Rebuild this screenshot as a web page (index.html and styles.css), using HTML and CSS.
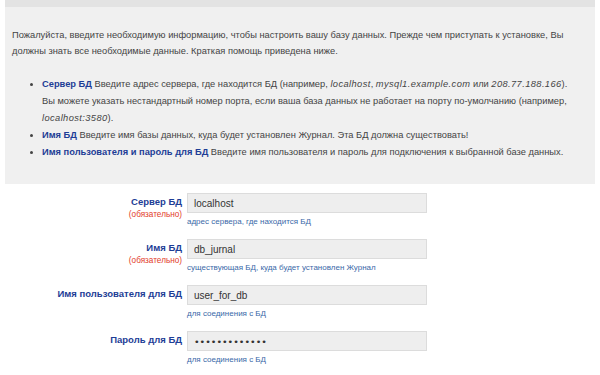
FILE: index.html
```html
<!DOCTYPE html>
<html lang="ru">
<head>
  <meta charset="UTF-8">
  <title>Установка: база данных</title>
  <link rel="stylesheet" href="styles.css">
</head>
<body>

  <div class="intro">
    <p>Пожалуйста, введите необходимую информацию, чтобы настроить вашу базу данных. Прежде чем приступать к установке, Вы должны знать все необходимые данные. Краткая помощь приведена ниже.</p>
    <ul>
      <li><b>Сервер БД</b> Введите адрес сервера, где находится БД (например, <i>localhost</i>, <i>mysql1.example.com</i> или <i>208.77.188.166</i>). Вы можете указать нестандартный номер порта, если ваша база данных не работает на порту по-умолчанию (например, <i>localhost:3580</i>).</li>
      <li><b>Имя БД</b> Введите имя базы данных, куда будет установлен Журнал. Эта БД должна существовать!</li>
      <li><b>Имя пользователя и пароль для БД</b> Введите имя пользователя и пароль для подключения к выбранной базе данных.</li>
    </ul>
  </div>

  <form class="db-form">
    <div class="row">
      <label for="dbHost">Сервер БД<span class="req">(обязательно)</span></label>
      <div class="field">
        <input type="text" id="dbHost" value="localhost">
        <span class="hint">адрес сервера, где находится БД</span>
      </div>
    </div>
    <div class="row">
      <label for="dbName">Имя БД<span class="req">(обязательно)</span></label>
      <div class="field">
        <input type="text" id="dbName" value="db_jurnal">
        <span class="hint">существующая БД, куда будет установлен Журнал</span>
      </div>
    </div>
    <div class="row">
      <label for="dbUser">Имя пользователя для БД</label>
      <div class="field">
        <input type="text" id="dbUser" value="user_for_db">
        <span class="hint">для соединения с БД</span>
      </div>
    </div>
    <div class="row">
      <label for="dbPass">Пароль для БД</label>
      <div class="field">
        <input type="password" id="dbPass" value="secretpasswor">
        <span class="hint">для соединения с БД</span>
      </div>
    </div>
  </form>

</body>
</html>
```

FILE: styles.css
```css
* {
  box-sizing: border-box;
  margin: 0;
  padding: 0;
}
body {
  background: #fff;
  color: #444;
  font: 9.3px/17px "Liberation Sans", Arial, sans-serif;
  padding: 0 5px;
}
b {
  color: #1d3d96;
}
i {
  letter-spacing: 0.4px;
}
.intro {
  background: #f0f0f0;
  border-top: 7px solid #e3e3e3;
  padding: 20px 7px 23px;
}
.intro p {
  line-height: 16px;
}
.intro ul {
  margin-top: 17px;
  padding: 0 8px 0 30px;
}
.db-form {
  padding-top: 9px;
}
.row {
  display: grid;
  grid-template-columns: 177px 240px;
  column-gap: 5px;
  height: 46px;
}
.row label {
  color: #1d3d96;
  font-weight: bold;
  font-size: 9.5px;
  text-align: right;
  padding-top: 2px;
  line-height: 14px;
}
.req {
  display: block;
  color: #e23b2a;
  font-size: 8.2px;
  font-weight: normal;
  line-height: 12px;
}
.field input {
  display: block;
  width: 240px;
  height: 20px;
  background: #eee;
  border: 1px solid #dcdcdc;
  padding: 0 6px;
  font: 10px "Liberation Sans", Arial, sans-serif;
  color: #333;
}
.field input[type="password"] {
  font-family: "DejaVu Sans", sans-serif;
  font-size: 9.5px;
}
.hint {
  display: block;
  margin-top: 2px;
  color: #3a69a8;
  font-size: 8px;
  line-height: 14px;
}
```
